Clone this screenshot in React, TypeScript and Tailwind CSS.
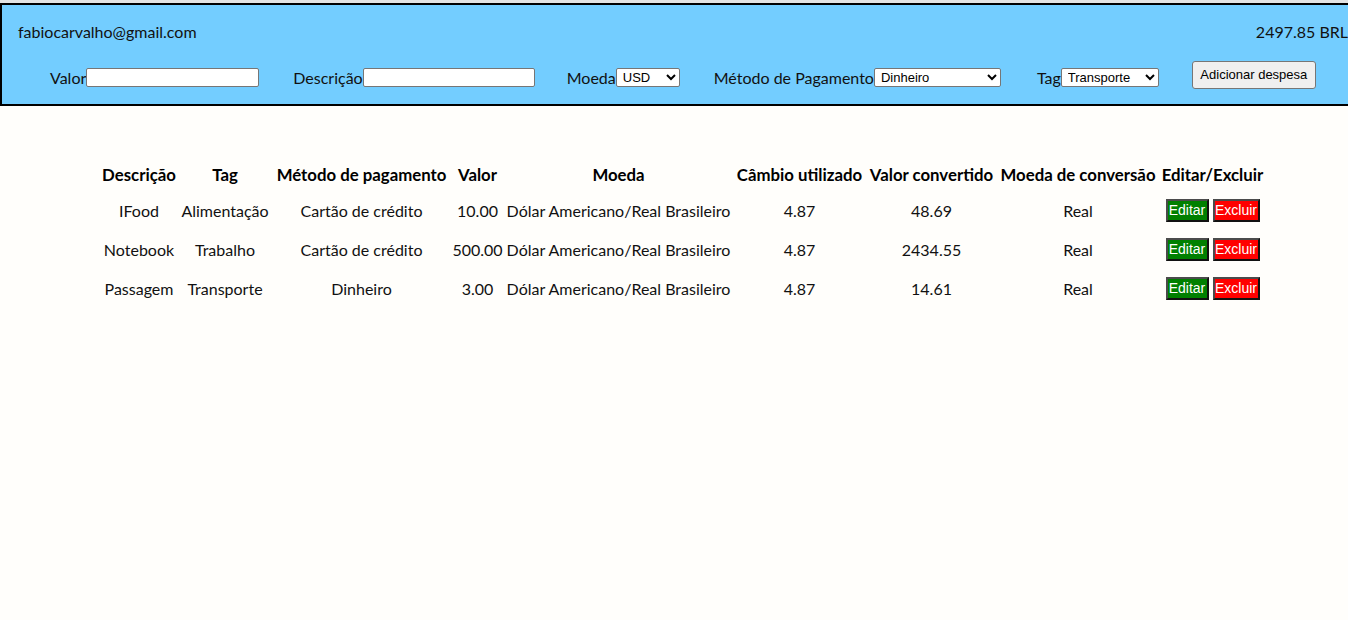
import React from "react";

const rows = [
  { d: "IFood", t: "Alimentação", m: "Cartão de crédito", v: "10.00", c: "48.69" },
  { d: "Notebook", t: "Trabalho", m: "Cartão de crédito", v: "500.00", c: "2434.55" },
  { d: "Passagem", t: "Transporte", m: "Dinheiro", v: "3.00", c: "14.61" },
];

const widths = [78, 94, 179, 53, 229, 133, 131, 162, 107];
const heads = [
  "Descrição",
  "Tag",
  "Método de pagamento",
  "Valor",
  "Moeda",
  "Câmbio utilizado",
  "Valor convertido",
  "Moeda de conversão",
  "Editar/Excluir",
];

const inputCls =
  "h-[19px] border border-[#767676] rounded-[2px] bg-white px-[2px] text-[13px] text-black font-['Liberation_Sans',Arial,sans-serif]";

export default function App() {
  return (
    <div
      className="min-h-[620px] w-[1366px] bg-[#fffefb] text-[#111] border-t-[3px] border-[#e3e3e3] font-['Lato','Open_Sans',sans-serif] text-[16px]"
    >
      <header className="w-[1366px] border-2 border-black bg-[#73cdff] pt-[16px] pb-[15px]">
        <div className="flex h-[22px] items-center justify-between pl-[16px] pr-[16px] leading-[22px]">
          <span>fabiocarvalho@gmail.com</span>
          <span>2497.85 BRL</span>
        </div>
        <div className="mt-[18px] flex h-[28px] items-start pl-[48px]">
          <div className="mt-[7px] flex h-[19px] items-center">
            <span className="leading-[19px]">Valor</span>
            <input type="text" className={inputCls + " w-[173px]"} />
          </div>
          <div className="ml-[34px] mt-[7px] flex h-[19px] items-center">
            <span className="leading-[19px]">Descrição</span>
            <input type="text" className={inputCls + " w-[172px]"} />
          </div>
          <div className="ml-[32px] mt-[7px] flex h-[19px] items-center">
            <span className="leading-[19px]">Moeda</span>
            <select className={inputCls + " w-[64px]"} defaultValue="USD">
              <option>USD</option>
            </select>
          </div>
          <div className="ml-[34px] mt-[7px] flex h-[19px] items-center">
            <span className="leading-[19px]">Método de Pagamento</span>
            <select className={inputCls + " w-[127px]"} defaultValue="Dinheiro">
              <option>Dinheiro</option>
            </select>
          </div>
          <div className="ml-[36px] mt-[7px] flex h-[19px] items-center">
            <span className="leading-[19px]">Tag</span>
            <select className={inputCls + " w-[98px]"} defaultValue="Transporte">
              <option>Transporte</option>
            </select>
          </div>
          <button className="ml-[33px] h-[28px] w-[124px] rounded-[3px] border border-[#767676] bg-[#efefef] text-[13px] text-black font-['Liberation_Sans',Arial,sans-serif]">
            Adicionar despesa
          </button>
        </div>
      </header>

      <table className="mx-auto mt-[53px] w-[1166px] table-fixed border-collapse text-center">
        <colgroup>
          {widths.map((w, i) => (
            <col key={i} style={{ width: w }} />
          ))}
        </colgroup>
        <thead>
          <tr className="h-[32px]">
            {heads.map((h) => (
              <th key={h} className="whitespace-nowrap p-0 text-[16.8px] font-bold text-black">
                {h}
              </th>
            ))}
          </tr>
        </thead>
        <tbody>
          {rows.map((r) => (
            <tr key={r.d} className="h-[39px]">
              <td className="whitespace-nowrap p-0">{r.d}</td>
              <td className="whitespace-nowrap p-0">{r.t}</td>
              <td className="whitespace-nowrap p-0">{r.m}</td>
              <td className="whitespace-nowrap p-0">{r.v}</td>
              <td className="whitespace-nowrap p-0">Dólar Americano/Real Brasileiro</td>
              <td className="whitespace-nowrap p-0">4.87</td>
              <td className="whitespace-nowrap p-0">{r.c}</td>
              <td className="whitespace-nowrap p-0">Real</td>
              <td className="whitespace-nowrap p-0">
                <div className="flex items-center justify-center gap-[4px] font-['Liberation_Sans',Arial,sans-serif] text-[14px] text-white">
                  <button className="h-[23px] w-[43px] border-2 border-[#4b4b4b] border-b-[#111] border-r-[#111] bg-[#008000] leading-[19px]">
                    Editar
                  </button>
                  <button className="h-[23px] w-[47px] border-2 border-[#4b4b4b] border-b-[#111] border-r-[#111] bg-[#ff0000] leading-[19px]">
                    Excluir
                  </button>
                </div>
              </td>
            </tr>
          ))}
        </tbody>
      </table>
    </div>
  );
}
